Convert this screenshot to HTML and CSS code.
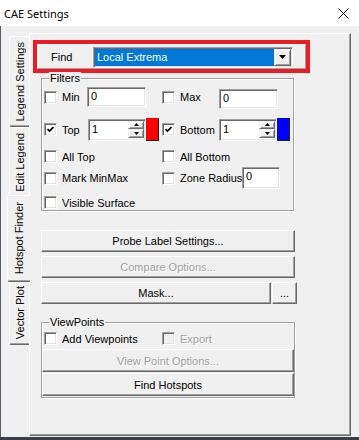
FILE: index.html
```html
<!DOCTYPE html>
<html lang="en">
<head>
  <meta charset="UTF-8" />
  <title>CAE Settings</title>
  <link rel="stylesheet" href="styles.css">
</head>
<body>

<div class="window">
  <div class="titlebar">
    <span class="title">CAE Settings</span>
    <svg class="close" width="11" height="11" viewBox="0 0 11 11"><path d="M0.5 0.5 L10.5 10.5 M10.5 0.5 L0.5 10.5" stroke="#000" stroke-width="1" fill="none"/></svg>
  </div>

  <div class="client">
    <div class="tabs">
      <div class="tab tab-legend"><span>Legend Settings</span></div>
      <div class="tab tab-edit"><span>Edit Legend</span></div>
      <div class="tab tab-hotspot active"><span>Hotspot Finder</span></div>
      <div class="tab tab-vector"><span>Vector Plot</span></div>
    </div>

    <div class="page">
      <!-- Find -->
      <div class="find-box">
        <div class="find-inner">
          <span class="find-label">Find</span>
          <div class="combo">
            <span class="combo-value">Local Extrema</span>
            <span class="combo-btn"><svg width="7" height="4" viewBox="0 0 7 4"><polygon points="0,0 7,0 3.5,4" fill="#000"/></svg></span>
          </div>
        </div>
      </div>

      <!-- Filters -->
      <div class="group filters">
        <span class="group-title">Filters</span>
        <div class="row r1">
          <div class="cell cell-left">
            <span class="check"></span><span class="lbl w25">Min</span><span class="field w59">0</span>
          </div>
          <div class="cell">
            <span class="check"></span><span class="lbl w39">Max</span><span class="field w59 lower">0</span>
          </div>
        </div>
        <div class="row r2">
          <div class="cell cell-left">
            <span class="check on"><svg width="7" height="7" viewBox="0 0 7 7"><path d="M0.5 3 L2.5 5 L6.5 1" stroke="#000" stroke-width="1.7" fill="none"/></svg></span>
            <span class="lbl w26">Top</span>
            <div class="spin">
              <span class="spin-text">1</span>
              <span class="spin-btns">
                <span class="spin-btn"><svg width="5" height="3" viewBox="0 0 5 3"><polygon points="0,3 5,3 2.5,0" fill="#000"/></svg></span>
                <span class="spin-btn"><svg width="5" height="3" viewBox="0 0 5 3"><polygon points="0,0 5,0 2.5,3" fill="#000"/></svg></span>
              </span>
            </div>
            <span class="swatch red"></span>
          </div>
          <div class="cell">
            <span class="check on"><svg width="7" height="7" viewBox="0 0 7 7"><path d="M0.5 3 L2.5 5 L6.5 1" stroke="#000" stroke-width="1.7" fill="none"/></svg></span>
            <span class="lbl w39">Bottom</span>
            <div class="spin">
              <span class="spin-text">1</span>
              <span class="spin-btns">
                <span class="spin-btn"><svg width="5" height="3" viewBox="0 0 5 3"><polygon points="0,3 5,3 2.5,0" fill="#000"/></svg></span>
                <span class="spin-btn"><svg width="5" height="3" viewBox="0 0 5 3"><polygon points="0,0 5,0 2.5,3" fill="#000"/></svg></span>
              </span>
            </div>
            <span class="swatch blue"></span>
          </div>
        </div>
        <div class="row r3">
          <div class="cell cell-left"><span class="check"></span><span class="lbl">All Top</span></div>
          <div class="cell"><span class="check"></span><span class="lbl">All Bottom</span></div>
        </div>
        <div class="row r4">
          <div class="cell cell-left"><span class="check"></span><span class="lbl">Mark MinMax</span></div>
          <div class="cell"><span class="check"></span><span class="lbl w62">Zone Radius</span><span class="field w38">0</span></div>
        </div>
        <div class="row r5">
          <div class="cell cell-left"><span class="check"></span><span class="lbl">Visible Surface</span></div>
        </div>
      </div>

      <div class="btn probe">Probe Label Settings...</div>
      <div class="btn compare disabled">Compare Options...</div>
      <div class="mask-row">
        <div class="btn mask">Mask...</div>
        <div class="btn more">...</div>
      </div>

      <!-- ViewPoints -->
      <div class="group viewpoints">
        <span class="group-title">ViewPoints</span>
        <div class="row vp-row">
          <div class="cell cell-left"><span class="check"></span><span class="lbl">Add Viewpoints</span></div>
          <div class="cell"><span class="check off"></span><span class="lbl disabled">Export</span></div>
        </div>
        <div class="btn vp-btn vp-options disabled">View Point Options...</div>
        <div class="btn vp-btn vp-find">Find Hotspots</div>
      </div>
    </div>
  </div>
</div>

</body>
</html>
```

FILE: styles.css
```css
* {
  box-sizing: border-box;
}
html, body {
  margin: 0;
  padding: 0;
}
body {
  width: 359px;
  height: 440px;
  overflow: hidden;
  background: #f0f0f0;
  font-family: "Liberation Sans", Arial, sans-serif;
  font-size: 11px;
  color: #000;
}
.window {
  height: 440px;
  display: flex;
  flex-direction: column;
  border-bottom: 3px solid #3d3d47;
}
.titlebar {
  height: 26px;
  flex: none;
  background: #fff;
  display: flex;
  align-items: center;
}
.title {
  padding-left: 4px;
  font-family: "Noto Sans", "Open Sans", sans-serif;
  font-size: 11px;
}
.close {
  margin-left: auto;
  margin-right: 10px;
}
.client {
  flex: 1;
  display: flex;
  align-items: flex-start;
  padding-top: 7px;
  border-left: 1px solid #5c5c6c;
}

/* side tabs */
.tabs {
  width: 28px;
  flex: none;
  display: flex;
  flex-direction: column;
  align-items: flex-end;
  padding-top: 3px;
}
.tab {
  width: 20px;
  display: flex;
  align-items: center;
  justify-content: center;
  border: 1px solid;
  border-right: 0;
  border-color: #fff #fff #696969 #fff;
  border-radius: 2px 0 0 2px;
  box-shadow: inset 0 -1px 0 #a0a0a0;
}
.tab span {
  writing-mode: vertical-rl;
  transform: rotate(180deg);
  white-space: nowrap;
}
.tab-legend { height: 91px; }
.tab-edit { height: 70px; }
.tab-hotspot {
  height: 87px;
  width: 23px;
  margin: -2px -1px -2px 0;
  position: relative;
  z-index: 1;
  background: #f0f0f0;
}
.tab-vector { height: 65px; }

/* tab page */
.page {
  width: 322px;
  height: 403px;
  flex: none;
  border: 1px solid;
  border-color: #fff #696969 #696969 #fff;
  box-shadow: inset -1px -1px 0 #a0a0a0;
  padding: 6px 0 0 3px;
  display: flex;
  flex-direction: column;
  align-items: flex-start;
}

/* find */
.find-box {
  width: 277px;
  height: 33px;
  border: 4px solid #ed1c24;
  display: flex;
}
.find-inner {
  flex: 1;
  display: flex;
  align-items: center;
  border: 1px solid;
  border-color: #fff #a0a0a0 #a0a0a0 #fff;
  padding: 1px 0 0 13px;
}
.find-label {
  width: 42px;
}
.combo {
  width: 200px;
  height: 21px;
  display: flex;
  background: #fff;
  border: 1px solid;
  border-color: #a0a0a0 #fff #fff #a0a0a0;
  box-shadow: inset 1px 1px 0 #696969, inset -1px -1px 0 #e3e3e3;
  padding: 1px;
}
.combo-value {
  flex: 1;
  background: #0078d7;
  color: #fff;
  padding-left: 2px;
  line-height: 17px;
}
.combo-btn {
  width: 17px;
  display: flex;
  align-items: center;
  justify-content: center;
  background: #f0f0f0;
  border: 1px solid;
  border-color: #f0f0f0 #696969 #696969 #f0f0f0;
  box-shadow: inset 1px 1px 0 #fff, inset -1px -1px 0 #a0a0a0;
}

/* groups */
.group {
  border: 1px solid #a0a0a0;
  box-shadow: inset 1px 1px 0 #fff, 1px 1px 0 #fff;
  margin-left: 8px;
}
.group-title {
  display: block;
  width: fit-content;
  margin: -7px 0 0 7px;
  padding: 0 1px;
  line-height: 13px;
  background: #f0f0f0;
}
.filters {
  width: 253px;
  height: 133px;
  margin-top: 5px;
}
.viewpoints {
  width: 254px;
  height: 76px;
  margin-top: 18px;
}
.row {
  display: flex;
  align-items: center;
  padding-left: 2px;
}
.r1 { height: 22px; margin-top: 1px; }
.r2 { height: 23px; margin-top: 10px; }
.r3 { height: 13px; margin-top: 9px; }
.r4 { height: 22px; margin-top: 4px; }
.r5 { height: 13px; margin-top: 7px; }
.vp-row { height: 13px; margin-top: 3px; }
.cell {
  display: flex;
  align-items: center;
}
.cell-left {
  width: 118px;
}
.lbl {
  margin-left: 5px;
  white-space: nowrap;
}
.w25 { width: 25px; }
.w26 { width: 26px; }
.w39 { width: 39px; }
.w62 { width: 62px; }
.disabled {
  color: #a0a0a0;
  text-shadow: 1px 1px 0 #fff;
}

.check {
  width: 13px;
  height: 13px;
  flex: none;
  background: #fff;
  border: 1px solid;
  border-color: #a0a0a0 #fff #fff #a0a0a0;
  box-shadow: inset 1px 1px 0 #696969, inset -1px -1px 0 #e3e3e3;
  display: flex;
  align-items: center;
  justify-content: center;
}
.check.off {
  background: #f0f0f0;
}

.field {
  height: 20px;
  background: #fff;
  border: 1px solid;
  border-color: #a0a0a0 #fff #fff #a0a0a0;
  box-shadow: inset 1px 1px 0 #696969, inset -1px -1px 0 #e3e3e3;
  padding: 2px 0 0 3px;
  line-height: 13px;
}
.w59 { width: 59px; }
.w38 { width: 38px; height: 22px; }
.lower { margin-top: 4px; }

.spin {
  width: 58px;
  height: 22px;
  display: flex;
  background: #fff;
  border: 1px solid;
  border-color: #a0a0a0 #fff #fff #a0a0a0;
  box-shadow: inset 1px 1px 0 #696969, inset -1px -1px 0 #e3e3e3;
  padding: 1px 1px 2px 1px;
}
.spin-text {
  flex: 1;
  padding: 2px 0 0 2px;
  line-height: 13px;
}
.spin-btns {
  width: 16px;
  display: flex;
  flex-direction: column;
}
.spin-btn {
  flex: 1;
  display: flex;
  align-items: center;
  justify-content: center;
  background: #f0f0f0;
  border: 1px solid;
  border-color: #f0f0f0 #696969 #696969 #f0f0f0;
  box-shadow: inset 1px 1px 0 #fff, inset -1px -1px 0 #a0a0a0;
}
.swatch {
  width: 13px;
  height: 23px;
  flex: none;
  border-right: 1px solid #202020;
  border-bottom: 1px solid #202020;
}
.swatch.red { background: #ff0000; }
.swatch.blue { background: #0000ff; }

/* buttons */
.btn {
  height: 22px;
  display: flex;
  align-items: center;
  justify-content: center;
  background: #f0f0f0;
  border: 1px solid;
  border-color: #fff #696969 #696969 #fff;
  box-shadow: inset -1px -1px 0 #a0a0a0;
  white-space: nowrap;
}
.probe {
  width: 254px;
  margin: 19px 0 0 8px;
}
.compare {
  width: 254px;
  margin: 4px 0 0 8px;
}
.mask-row {
  display: flex;
  gap: 1px;
  margin: 4px 0 0 8px;
}
.mask { width: 230px; }
.more { width: 25px; }
.vp-btn {
  width: 252px;
  height: 23px;
}
.vp-options { margin-top: 4px; }
.vp-find { margin-top: 1px; }
```
